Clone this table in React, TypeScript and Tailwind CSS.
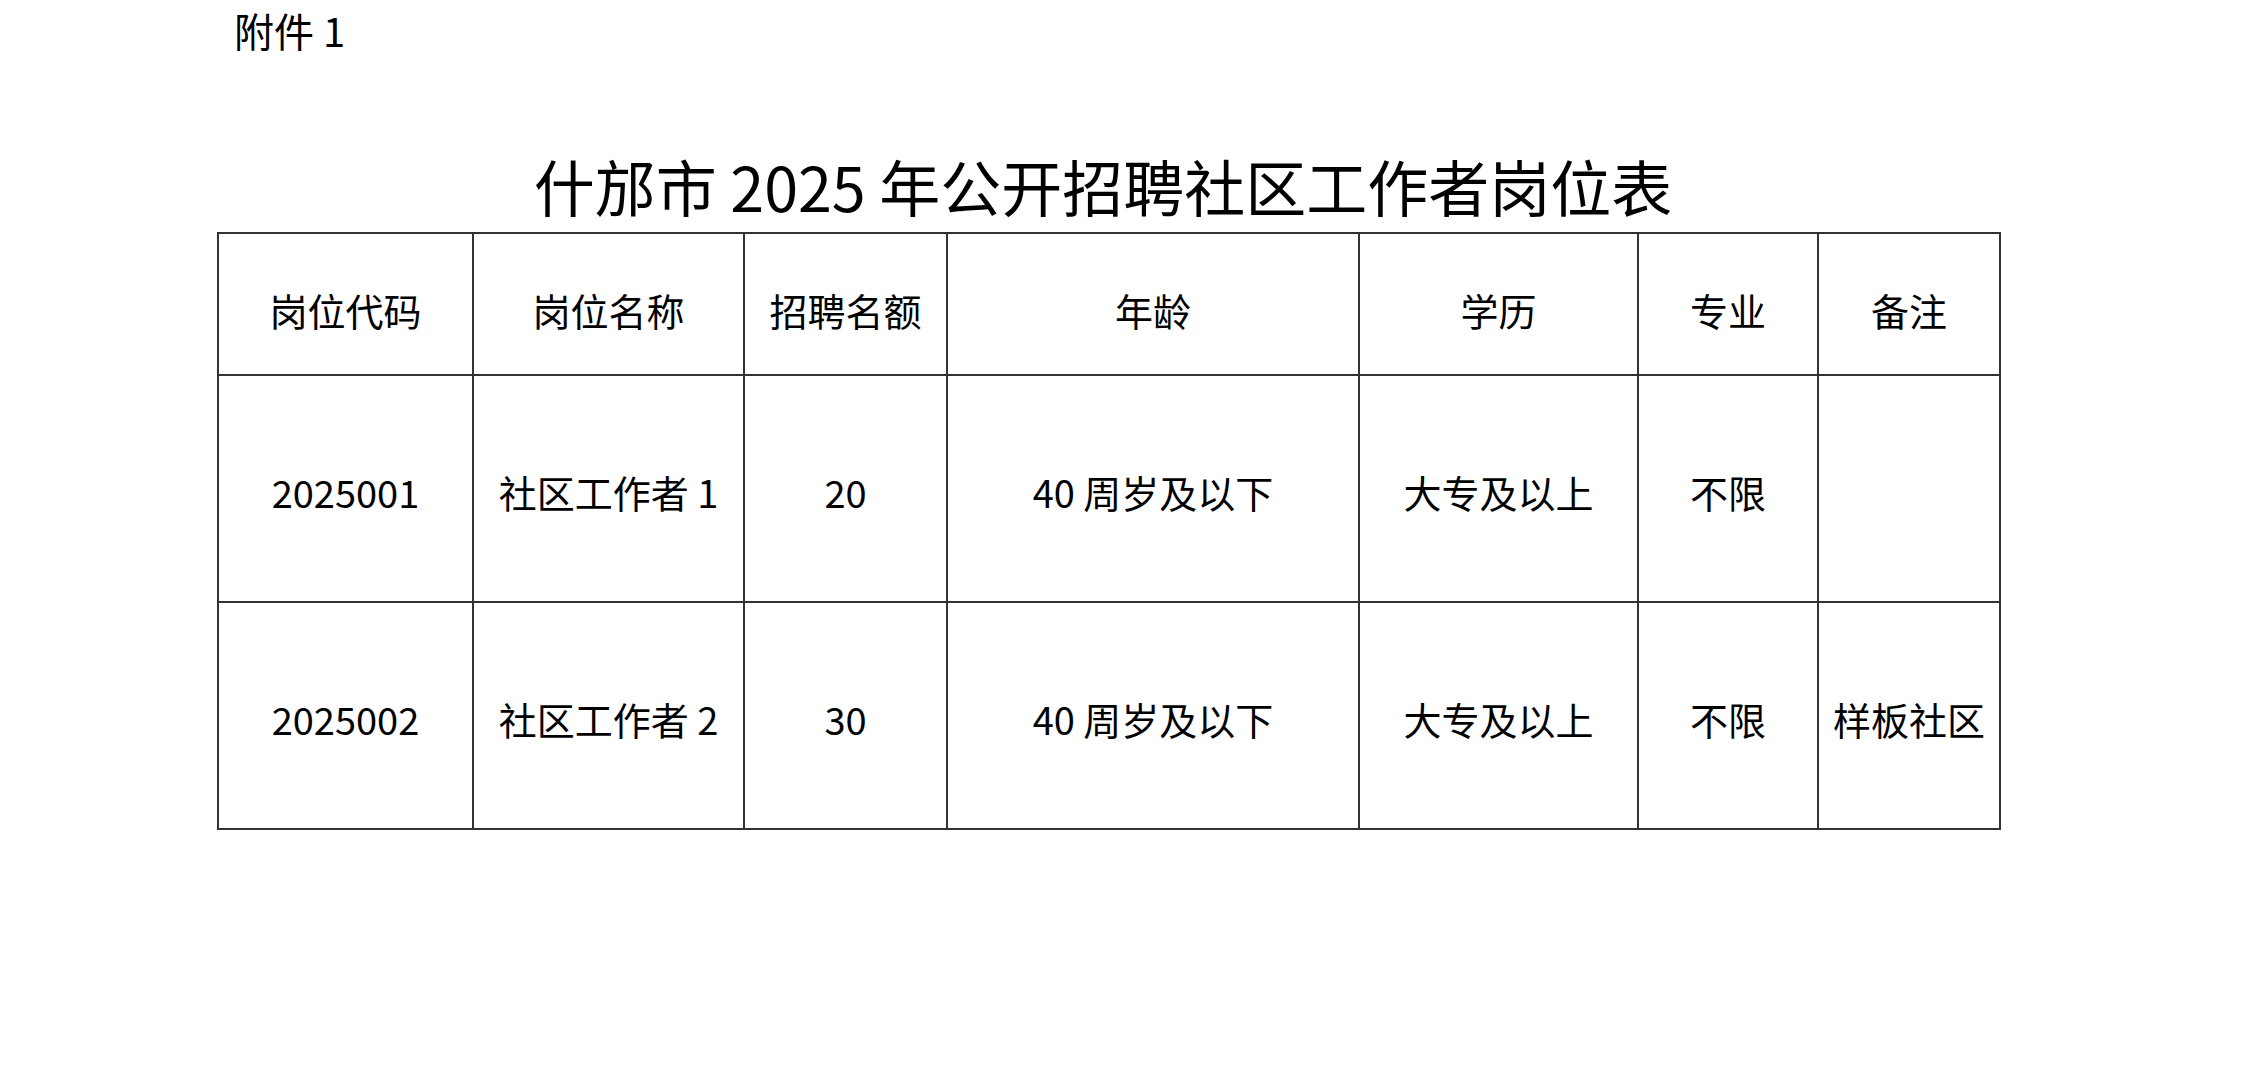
const headers = ["岗位代码", "岗位名称", "招聘名额", "年龄", "学历", "专业", "备注"];

const rows = [
  ["2025001", "社区工作者 1", "20", "40 周岁及以下", "大专及以上", "不限", ""],
  ["2025002", "社区工作者 2", "30", "40 周岁及以下", "大专及以上", "不限", "样板社区"],
];

const widths = ["w-[255px]", "w-[271px]", "w-[203px]", "w-[412px]", "w-[279px]", "w-[180px]", "w-[182px]"];

export default function App() {
  return (
    <div
      className="min-h-screen w-full bg-white text-black"
      style={{ fontFamily: '"Noto Sans CJK SC", "Noto Sans", sans-serif' }}
    >
      <div className="pl-[234px] pt-[5px] text-[40px] leading-[50px]">附件 1</div>

      <div className="ml-[217px] w-[1782px]">
        <h1 className="mt-[96px] pr-[10px] text-center text-[61px] font-normal leading-[70px]">
          什邡市 2025 年公开招聘社区工作者岗位表
        </h1>

        <table className="mt-[11px] w-full table-fixed border-collapse border-2 border-[#333] text-[38px]">
          <colgroup>
            {widths.map((w, i) => (
              <col key={i} className={w} />
            ))}
          </colgroup>
          <thead>
            <tr className="h-[142px]">
              {headers.map((h) => (
                <th key={h} className="border-2 border-[#333] pt-[10px] text-center font-normal">
                  {h}
                </th>
              ))}
            </tr>
          </thead>
          <tbody>
            {rows.map((r) => (
              <tr key={r[0]} className="h-[227px]">
                {r.map((c, i) => (
                  <td key={i} className="border-2 border-[#333] pt-[6px] text-center whitespace-nowrap">
                    {c}
                  </td>
                ))}
              </tr>
            ))}
          </tbody>
        </table>
      </div>
    </div>
  );
}
